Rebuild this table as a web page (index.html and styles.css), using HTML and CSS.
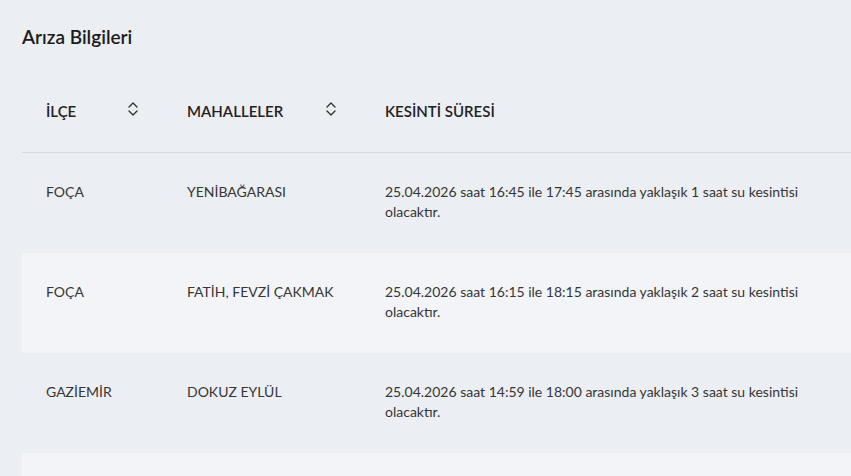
FILE: index.html
```html
<!DOCTYPE html>
<html lang="tr">

<head>
    <meta charset="UTF-8">
    <title>Arıza Bilgileri</title>
    <link rel="stylesheet" href="styles.css">
</head>

<body>

    <div class="page">
        <h2 class="title">Arıza Bilgileri</h2>

        <table class="outage-table">
            <thead>
                <tr>
                    <th class="col-district">
                        <div class="th-inner">
                            <span>İlçe</span>
                            <svg class="sort-icon" viewBox="0 0 12 16" width="12" height="16">
                                <path d="M2 6 L6 2 L10 6" />
                                <path d="M2 10 L6 14 L10 10" />
                            </svg>
                        </div>
                    </th>
                    <th class="col-area">
                        <div class="th-inner">
                            <span>Mahalleler</span>
                            <svg class="sort-icon" viewBox="0 0 12 16" width="12" height="16">
                                <path d="M2 6 L6 2 L10 6" />
                                <path d="M2 10 L6 14 L10 10" />
                            </svg>
                        </div>
                    </th>
                    <th class="col-time">
                        <div class="th-inner"><span>Kesinti Süresi</span></div>
                    </th>
                </tr>
            </thead>
            <tbody>
                <tr>
                    <td>FOÇA</td>
                    <td>YENİBAĞARASI</td>
                    <td>25.04.2026 saat 16:45 ile 17:45 arasında yaklaşık 1 saat su kesintisi olacaktır.</td>
                </tr>
                <tr>
                    <td>FOÇA</td>
                    <td>FATİH, FEVZİ ÇAKMAK</td>
                    <td>25.04.2026 saat 16:15 ile 18:15 arasında yaklaşık 2 saat su kesintisi olacaktır.</td>
                </tr>
                <tr>
                    <td>GAZİEMİR</td>
                    <td>DOKUZ EYLÜL</td>
                    <td>25.04.2026 saat 14:59 ile 18:00 arasında yaklaşık 3 saat su kesintisi olacaktır.</td>
                </tr>
                <!-- next row starts below the fold -->
                <tr class="row-more">
                    <td></td>
                    <td></td>
                    <td></td>
                </tr>
            </tbody>
        </table>
    </div>

</body>

</html>
```

FILE: styles.css
```css
* {
    box-sizing: border-box;
}

html,
body {
    margin: 0;
    padding: 0;
    background: #ebeef2;
    font-family: Lato, "Noto Sans", sans-serif;
    color: #2b2b2b;
    overflow: hidden;
}

.page {
    padding: 0 0 0 22px;
}

.title {
    margin: 25px 0 0;
    font-size: 19px;
    line-height: 24px;
    font-weight: 600;
    color: #1c1c1c;
}

.outage-table {
    margin-top: 23px;
    border-collapse: collapse;
    table-layout: fixed;
    width: 900px;
}

.col-district {
    width: 141px;
}

.col-area {
    width: 198px;
}

.outage-table th {
    padding: 29px 24px 31px;
    text-align: left;
    font-size: 15px;
    line-height: 20px;
    font-weight: 600;
    text-transform: uppercase;
    color: #222;
    border-bottom: 1px solid #d6dae0;
}

.th-inner {
    display: flex;
    align-items: center;
    justify-content: space-between;
}

.sort-icon {
    fill: none;
    stroke: #333;
    stroke-width: 1.4;
    stroke-linecap: round;
    stroke-linejoin: round;
    margin-top: -4px;
}

.outage-table td {
    padding: 29px 24px 31px;
    height: 100px;
    vertical-align: top;
    font-size: 14px;
    line-height: 20px;
    color: #363636;
}

.outage-table td:last-child {
    padding-right: 90px;
}

.outage-table tbody tr:nth-child(even) {
    background: #f2f4f8;
}
```
